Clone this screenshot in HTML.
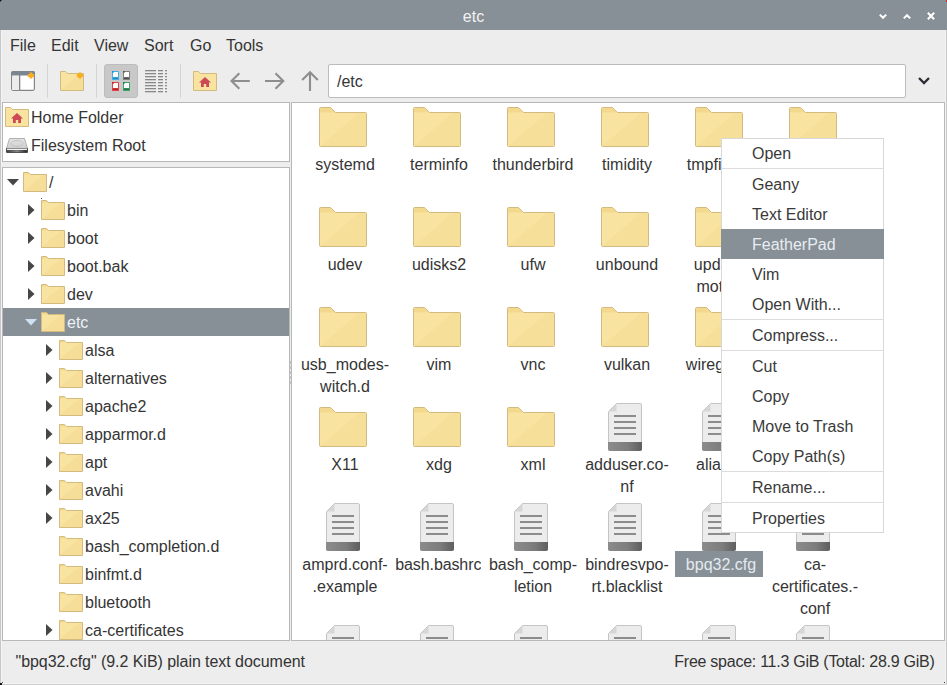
<!DOCTYPE html><html><head><meta charset="utf-8"><style>html,body{margin:0;padding:0;width:947px;height:685px;overflow:hidden;background:#ededed;}.t{position:absolute;white-space:pre;font-family:"Liberation Sans", sans-serif;}svg{display:block}</style></head><body>
<div style="position:absolute;left:0px;top:0px;width:947px;height:685px;background:#ededed"></div>
<div style="position:absolute;left:0px;top:0px;width:947px;height:30px;background:#878f97"></div>
<div class="t" style="left:323.5px;width:300px;text-align:center;top:7.46px;font-size:16px;line-height:20px;color:#f2f2f2;">etc</div>
<svg style="position:absolute;left:876px;top:10px" width="14" height="14" viewBox="0 0 14 14"><path d="M3.8 4.6L7 7.8L10.2 4.6" fill="none" stroke="#fff" stroke-width="2"/></svg>
<svg style="position:absolute;left:900px;top:10px" width="14" height="14" viewBox="0 0 14 14"><path d="M3.8 8.4L7 5.2L10.2 8.4" fill="none" stroke="#fff" stroke-width="2"/></svg>
<svg style="position:absolute;left:924px;top:9px" width="14" height="14" viewBox="0 0 14 14"><path d="M3.8 3.8L10.2 10.2M10.2 3.8L3.8 10.2" fill="none" stroke="#fff" stroke-width="2"/></svg>
<div style="position:absolute;left:946px;top:0px;width:1px;height:2px;background:#e02020"></div>
<div style="position:absolute;left:0px;top:0px;width:1px;height:1px;background:#111"></div>
<div style="position:absolute;left:1px;top:0px;width:1px;height:1px;background:#555"></div>
<div style="position:absolute;left:0px;top:1px;width:1px;height:1px;background:#555"></div>
<div style="position:absolute;left:0px;top:30px;width:1px;height:655px;background:#c8c8c8"></div>
<div style="position:absolute;left:946px;top:30px;width:1px;height:655px;background:#c8c8c8"></div>
<div style="position:absolute;left:1px;top:30px;width:1px;height:654px;background:#f3f3f3"></div>
<div style="position:absolute;left:945px;top:30px;width:1px;height:654px;background:#f3f3f3"></div>
<div style="position:absolute;left:0px;top:684px;width:947px;height:1px;background:#cdcdcd"></div>
<div style="position:absolute;left:1px;top:683px;width:945px;height:1px;background:#f3f3f3"></div>
<div style="position:absolute;left:0px;top:683px;width:2px;height:2px;background:#111"></div>
<div style="position:absolute;left:2px;top:682px;width:1px;height:1px;background:#444"></div>
<div style="position:absolute;left:944px;top:682px;width:1px;height:1px;background:#333"></div>
<div class="t" style="left:10px;top:36.46px;font-size:16px;line-height:20px;color:#353535;">File</div>
<div class="t" style="left:51px;top:36.46px;font-size:16px;line-height:20px;color:#353535;">Edit</div>
<div class="t" style="left:94px;top:36.46px;font-size:16px;line-height:20px;color:#353535;">View</div>
<div class="t" style="left:144px;top:36.46px;font-size:16px;line-height:20px;color:#353535;">Sort</div>
<div class="t" style="left:190px;top:36.46px;font-size:16px;line-height:20px;color:#353535;">Go</div>
<div class="t" style="left:226px;top:36.46px;font-size:16px;line-height:20px;color:#353535;">Tools</div>
<svg style="position:absolute;left:11px;top:71px" width="24" height="20" viewBox="0 0 24 20"><rect x="0.6" y="0.6" width="22.8" height="18.8" rx="1.8" fill="#fff" stroke="#858585" stroke-width="1.2"/><rect x="1.2" y="5" width="7.2" height="14" fill="#ececec"/><path d="M0 4.6V2.2Q0 0 2.2 0H21.8Q24 0 24 2.2V4.6Z" fill="#7b858f"/><rect x="8" y="4" width="1.3" height="16" fill="#858585"/><path d="M20 1.4V7.6M16.9 4.5H23.1" stroke="#f8ae22" stroke-width="2.8"/></svg>
<div style="position:absolute;left:47px;top:64px;width:1px;height:34px;background:#d4d4d4"></div>
<svg style="position:absolute;left:60px;top:71px" width="24" height="20" viewBox="0 0 24 20"><path d="M0.5 19.5V0.5H5.5L7.5 2.5H23.5V19.5Z" fill="#f8e3a0" stroke="#d3ba80"/><path d="M1 19L20 3H23V19Z" fill="#f3da92" opacity="0.6"/><path d="M20 1.4V7.6M16.9 4.5H23.1" stroke="#f8ae22" stroke-width="2.8"/></svg>
<div style="position:absolute;left:96px;top:64px;width:1px;height:34px;background:#d4d4d4"></div>
<div style="position:absolute;left:104px;top:64px;width:34px;height:34px;background:#c8c8c8;border-radius:3px;box-sizing:border-box;border:1px solid #bdbdbd"></div>
<svg style="position:absolute;left:112px;top:71px" width="7" height="9" viewBox="0 0 7 9"><rect x="0" y="0" width="7" height="9" rx="0.6" fill="#3fb0e6"/><path d="M1 2L2 1H6V6H1Z" fill="#fff"/><rect x="1" y="6.5" width="5" height="1.5" fill="#1e8cc8"/><rect x="0" y="0" width="1.5" height="1.5" fill="#1e8cc8"/></svg>
<svg style="position:absolute;left:123px;top:71px" width="7" height="9" viewBox="0 0 7 9"><rect x="0" y="0" width="7" height="9" rx="0.6" fill="#808080"/><path d="M1 2L2 1H6V6H1Z" fill="#fff"/><rect x="1" y="6.5" width="5" height="1.5" fill="#505050"/><rect x="0" y="0" width="1.5" height="1.5" fill="#505050"/></svg>
<svg style="position:absolute;left:112px;top:82px" width="7" height="9" viewBox="0 0 7 9"><rect x="0" y="0" width="7" height="9" rx="0.6" fill="#e04444"/><path d="M1 2L2 1H6V6H1Z" fill="#fff"/><rect x="1" y="6.5" width="5" height="1.5" fill="#c01e1e"/><rect x="0" y="0" width="1.5" height="1.5" fill="#c01e1e"/></svg>
<svg style="position:absolute;left:123px;top:82px" width="7" height="9" viewBox="0 0 7 9"><rect x="0" y="0" width="7" height="9" rx="0.6" fill="#44a06a"/><path d="M1 2L2 1H6V6H1Z" fill="#fff"/><rect x="1" y="6.5" width="5" height="1.5" fill="#237a48"/><rect x="0" y="0" width="1.5" height="1.5" fill="#237a48"/></svg>
<svg style="position:absolute;left:145px;top:70px" width="23" height="23" viewBox="0 0 23 23"><rect x="0" y="0" width="11" height="1.3" fill="#888888"/><rect x="13" y="0" width="5" height="1.3" fill="#888888"/><rect x="20" y="0" width="2" height="1.3" fill="#888888"/><rect x="0" y="3" width="11" height="1.3" fill="#888888"/><rect x="13" y="3" width="5" height="1.3" fill="#888888"/><rect x="20" y="3" width="2" height="1.3" fill="#888888"/><rect x="0" y="6" width="11" height="1.3" fill="#888888"/><rect x="13" y="6" width="5" height="1.3" fill="#888888"/><rect x="20" y="6" width="2" height="1.3" fill="#888888"/><rect x="0" y="9" width="11" height="1.3" fill="#888888"/><rect x="13" y="9" width="5" height="1.3" fill="#888888"/><rect x="20" y="9" width="2" height="1.3" fill="#888888"/><rect x="0" y="12" width="11" height="1.3" fill="#888888"/><rect x="13" y="12" width="5" height="1.3" fill="#888888"/><rect x="20" y="12" width="2" height="1.3" fill="#888888"/><rect x="0" y="15" width="11" height="1.3" fill="#888888"/><rect x="13" y="15" width="5" height="1.3" fill="#888888"/><rect x="20" y="15" width="2" height="1.3" fill="#888888"/><rect x="0" y="18" width="11" height="1.3" fill="#888888"/><rect x="13" y="18" width="5" height="1.3" fill="#888888"/><rect x="20" y="18" width="2" height="1.3" fill="#888888"/><rect x="0" y="21" width="11" height="1.3" fill="#888888"/><rect x="13" y="21" width="5" height="1.3" fill="#888888"/><rect x="20" y="21" width="2" height="1.3" fill="#888888"/></svg>
<div style="position:absolute;left:180px;top:64px;width:1px;height:34px;background:#d4d4d4"></div>
<svg style="position:absolute;left:193px;top:71px" width="24" height="20" viewBox="0 0 24 20"><path d="M0.5 19.5V0.5H5.5L7.5 2.5H23.5V19.5Z" fill="#f8e3a0" stroke="#d3ba80"/><path d="M12 6L18 11.5H16V16H8V11.5H6Z" fill="#cb4a55"/><rect x="10.8" y="13" width="2.4" height="3" fill="#f8e3a0"/></svg>
<svg style="position:absolute;left:228px;top:70px" width="24" height="22" viewBox="0 0 24 22"><path d="M21.8 11H4M11.3 3.2L3.5 11L11.3 18.8" fill="none" stroke="#8e8e8e" stroke-width="2.1"/></svg>
<svg style="position:absolute;left:262px;top:70px" width="24" height="22" viewBox="0 0 24 22"><path d="M3 11H20.8M13.5 3.2L21.3 11L13.5 18.8" fill="none" stroke="#8e8e8e" stroke-width="2.1"/></svg>
<svg style="position:absolute;left:298px;top:70px" width="24" height="22" viewBox="0 0 24 22"><path d="M12 21V3M4.2 10L12 2.2L19.8 10" fill="none" stroke="#8e8e8e" stroke-width="2.1"/></svg>
<div style="position:absolute;left:328px;top:64px;width:578px;height:34px;background:#fff;border:1px solid #bcbcbc;border-radius:2px;box-sizing:border-box"></div>
<div class="t" style="left:337px;top:72.46px;font-size:16px;line-height:20px;color:#353535;">/etc</div>
<svg style="position:absolute;left:916px;top:74px" width="16" height="14" viewBox="0 0 16 14"><path d="M3 4L8 9L13 4" fill="none" stroke="#2b2f33" stroke-width="2.4"/></svg>
<div style="position:absolute;left:2px;top:102px;width:288px;height:60px;background:#fff;border:1px solid #b8b8b8;box-sizing:border-box"></div>
<svg style="position:absolute;left:5px;top:107px" width="24" height="20" viewBox="0 0 24 20"><path d="M0.5 19.5V0.5H5.5L7.5 2.5H23.5V19.5Z" fill="#f8e3a0" stroke="#d3ba80"/><path d="M12 6L18 11.5H16V16H8V11.5H6Z" fill="#cb4a55"/><rect x="10.8" y="13" width="2.4" height="3" fill="#f8e3a0"/></svg>
<div class="t" style="left:31px;top:108.46px;font-size:16px;line-height:20px;color:#353535;">Home Folder</div>
<svg style="position:absolute;left:5px;top:137px" width="24" height="18" viewBox="0 0 24 18"><defs><linearGradient id="hd" x1="0" x2="1"><stop offset="0" stop-color="#444"/><stop offset="0.5" stop-color="#888"/><stop offset="1" stop-color="#2a2a2a"/></linearGradient><linearGradient id="ht" x1="0" y1="0" x2="0" y2="1"><stop offset="0" stop-color="#e4e4e4"/><stop offset="1" stop-color="#cfcfcf"/></linearGradient></defs><path d="M4.5 1.5H19.5L22.5 11.5H1.5Z" fill="url(#ht)" stroke="#a8a8a8" stroke-width="0.9"/><ellipse cx="12" cy="6.5" rx="6" ry="3" fill="none" stroke="#bdbdbd" stroke-width="0.8"/><rect x="1" y="11" width="22" height="5" rx="1" fill="#4a4a4a"/><rect x="2" y="11.6" width="20" height="1.4" fill="#f2f2f2"/><rect x="2.5" y="13.2" width="19" height="2" fill="url(#hd)"/></svg>
<div class="t" style="left:31px;top:136.46px;font-size:16px;line-height:20px;color:#353535;">Filesystem Root</div>
<div style="position:absolute;left:2px;top:167px;width:288px;height:474px;background:#fff;border:1px solid #b8b8b8;box-sizing:border-box"></div>
<div style="position:absolute;left:3px;top:168px;width:286px;height:472px;overflow:hidden">
<svg style="position:absolute;left:4px;top:11px" width="12" height="7" viewBox="0 0 12 7"><path d="M0 0H12L6 6.5Z" fill="#464646"/></svg>
<svg style="position:absolute;left:20px;top:4px" width="24" height="20" viewBox="0 0 24 20"><path d="M0.5 19.5V0.5H5.5L7.5 2.5H23.5V19.5Z" fill="#f8e3a0" stroke="#d3ba80"/><path d="M1 1H5.3L6.8 2.5H1Z" fill="#f3d98e"/><path d="M1 19L20 3H23V19Z" fill="#f3da92" opacity="0.5"/></svg>
<div class="t" style="left:46px;top:5.46px;font-size:16px;line-height:20px;color:#353535">/</div>
<svg style="position:absolute;left:25px;top:36px" width="7" height="12" viewBox="0 0 7 12"><path d="M0 0V12L6.5 6Z" fill="#464646"/></svg>
<svg style="position:absolute;left:38px;top:32px" width="24" height="20" viewBox="0 0 24 20"><path d="M0.5 19.5V0.5H5.5L7.5 2.5H23.5V19.5Z" fill="#f8e3a0" stroke="#d3ba80"/><path d="M1 1H5.3L6.8 2.5H1Z" fill="#f3d98e"/><path d="M1 19L20 3H23V19Z" fill="#f3da92" opacity="0.5"/></svg>
<div class="t" style="left:64px;top:33.46px;font-size:16px;line-height:20px;color:#353535">bin</div>
<svg style="position:absolute;left:25px;top:64px" width="7" height="12" viewBox="0 0 7 12"><path d="M0 0V12L6.5 6Z" fill="#464646"/></svg>
<svg style="position:absolute;left:38px;top:60px" width="24" height="20" viewBox="0 0 24 20"><path d="M0.5 19.5V0.5H5.5L7.5 2.5H23.5V19.5Z" fill="#f8e3a0" stroke="#d3ba80"/><path d="M1 1H5.3L6.8 2.5H1Z" fill="#f3d98e"/><path d="M1 19L20 3H23V19Z" fill="#f3da92" opacity="0.5"/></svg>
<div class="t" style="left:64px;top:61.46px;font-size:16px;line-height:20px;color:#353535">boot</div>
<svg style="position:absolute;left:25px;top:92px" width="7" height="12" viewBox="0 0 7 12"><path d="M0 0V12L6.5 6Z" fill="#464646"/></svg>
<svg style="position:absolute;left:38px;top:88px" width="24" height="20" viewBox="0 0 24 20"><path d="M0.5 19.5V0.5H5.5L7.5 2.5H23.5V19.5Z" fill="#f8e3a0" stroke="#d3ba80"/><path d="M1 1H5.3L6.8 2.5H1Z" fill="#f3d98e"/><path d="M1 19L20 3H23V19Z" fill="#f3da92" opacity="0.5"/></svg>
<div class="t" style="left:64px;top:89.46px;font-size:16px;line-height:20px;color:#353535">boot.bak</div>
<svg style="position:absolute;left:25px;top:120px" width="7" height="12" viewBox="0 0 7 12"><path d="M0 0V12L6.5 6Z" fill="#464646"/></svg>
<svg style="position:absolute;left:38px;top:116px" width="24" height="20" viewBox="0 0 24 20"><path d="M0.5 19.5V0.5H5.5L7.5 2.5H23.5V19.5Z" fill="#f8e3a0" stroke="#d3ba80"/><path d="M1 1H5.3L6.8 2.5H1Z" fill="#f3d98e"/><path d="M1 19L20 3H23V19Z" fill="#f3da92" opacity="0.5"/></svg>
<div class="t" style="left:64px;top:117.46px;font-size:16px;line-height:20px;color:#353535">dev</div>
<div style="position:absolute;left:0px;top:140px;width:286px;height:28px;background:#878f97"></div>
<svg style="position:absolute;left:22px;top:151px" width="12" height="7" viewBox="0 0 12 7"><path d="M0 0H12L6 6.5Z" fill="#cfe2f3"/></svg>
<svg style="position:absolute;left:38px;top:144px" width="24" height="20" viewBox="0 0 24 20"><path d="M0.5 19.5V0.5H5.5L7.5 2.5H23.5V19.5Z" fill="#f8e3a0" stroke="#d3ba80"/><path d="M1 1H5.3L6.8 2.5H1Z" fill="#f3d98e"/><path d="M1 19L20 3H23V19Z" fill="#f3da92" opacity="0.5"/></svg>
<div class="t" style="left:64px;top:145.46px;font-size:16px;line-height:20px;color:#eef2f6">etc</div>
<svg style="position:absolute;left:43px;top:176px" width="7" height="12" viewBox="0 0 7 12"><path d="M0 0V12L6.5 6Z" fill="#464646"/></svg>
<svg style="position:absolute;left:56px;top:172px" width="24" height="20" viewBox="0 0 24 20"><path d="M0.5 19.5V0.5H5.5L7.5 2.5H23.5V19.5Z" fill="#f8e3a0" stroke="#d3ba80"/><path d="M1 1H5.3L6.8 2.5H1Z" fill="#f3d98e"/><path d="M1 19L20 3H23V19Z" fill="#f3da92" opacity="0.5"/></svg>
<div class="t" style="left:82px;top:173.46px;font-size:16px;line-height:20px;color:#353535">alsa</div>
<svg style="position:absolute;left:43px;top:204px" width="7" height="12" viewBox="0 0 7 12"><path d="M0 0V12L6.5 6Z" fill="#464646"/></svg>
<svg style="position:absolute;left:56px;top:200px" width="24" height="20" viewBox="0 0 24 20"><path d="M0.5 19.5V0.5H5.5L7.5 2.5H23.5V19.5Z" fill="#f8e3a0" stroke="#d3ba80"/><path d="M1 1H5.3L6.8 2.5H1Z" fill="#f3d98e"/><path d="M1 19L20 3H23V19Z" fill="#f3da92" opacity="0.5"/></svg>
<div class="t" style="left:82px;top:201.46px;font-size:16px;line-height:20px;color:#353535">alternatives</div>
<svg style="position:absolute;left:43px;top:232px" width="7" height="12" viewBox="0 0 7 12"><path d="M0 0V12L6.5 6Z" fill="#464646"/></svg>
<svg style="position:absolute;left:56px;top:228px" width="24" height="20" viewBox="0 0 24 20"><path d="M0.5 19.5V0.5H5.5L7.5 2.5H23.5V19.5Z" fill="#f8e3a0" stroke="#d3ba80"/><path d="M1 1H5.3L6.8 2.5H1Z" fill="#f3d98e"/><path d="M1 19L20 3H23V19Z" fill="#f3da92" opacity="0.5"/></svg>
<div class="t" style="left:82px;top:229.46px;font-size:16px;line-height:20px;color:#353535">apache2</div>
<svg style="position:absolute;left:43px;top:260px" width="7" height="12" viewBox="0 0 7 12"><path d="M0 0V12L6.5 6Z" fill="#464646"/></svg>
<svg style="position:absolute;left:56px;top:256px" width="24" height="20" viewBox="0 0 24 20"><path d="M0.5 19.5V0.5H5.5L7.5 2.5H23.5V19.5Z" fill="#f8e3a0" stroke="#d3ba80"/><path d="M1 1H5.3L6.8 2.5H1Z" fill="#f3d98e"/><path d="M1 19L20 3H23V19Z" fill="#f3da92" opacity="0.5"/></svg>
<div class="t" style="left:82px;top:257.46px;font-size:16px;line-height:20px;color:#353535">apparmor.d</div>
<svg style="position:absolute;left:43px;top:288px" width="7" height="12" viewBox="0 0 7 12"><path d="M0 0V12L6.5 6Z" fill="#464646"/></svg>
<svg style="position:absolute;left:56px;top:284px" width="24" height="20" viewBox="0 0 24 20"><path d="M0.5 19.5V0.5H5.5L7.5 2.5H23.5V19.5Z" fill="#f8e3a0" stroke="#d3ba80"/><path d="M1 1H5.3L6.8 2.5H1Z" fill="#f3d98e"/><path d="M1 19L20 3H23V19Z" fill="#f3da92" opacity="0.5"/></svg>
<div class="t" style="left:82px;top:285.46px;font-size:16px;line-height:20px;color:#353535">apt</div>
<svg style="position:absolute;left:43px;top:316px" width="7" height="12" viewBox="0 0 7 12"><path d="M0 0V12L6.5 6Z" fill="#464646"/></svg>
<svg style="position:absolute;left:56px;top:312px" width="24" height="20" viewBox="0 0 24 20"><path d="M0.5 19.5V0.5H5.5L7.5 2.5H23.5V19.5Z" fill="#f8e3a0" stroke="#d3ba80"/><path d="M1 1H5.3L6.8 2.5H1Z" fill="#f3d98e"/><path d="M1 19L20 3H23V19Z" fill="#f3da92" opacity="0.5"/></svg>
<div class="t" style="left:82px;top:313.46px;font-size:16px;line-height:20px;color:#353535">avahi</div>
<svg style="position:absolute;left:43px;top:344px" width="7" height="12" viewBox="0 0 7 12"><path d="M0 0V12L6.5 6Z" fill="#464646"/></svg>
<svg style="position:absolute;left:56px;top:340px" width="24" height="20" viewBox="0 0 24 20"><path d="M0.5 19.5V0.5H5.5L7.5 2.5H23.5V19.5Z" fill="#f8e3a0" stroke="#d3ba80"/><path d="M1 1H5.3L6.8 2.5H1Z" fill="#f3d98e"/><path d="M1 19L20 3H23V19Z" fill="#f3da92" opacity="0.5"/></svg>
<div class="t" style="left:82px;top:341.46px;font-size:16px;line-height:20px;color:#353535">ax25</div>
<svg style="position:absolute;left:56px;top:368px" width="24" height="20" viewBox="0 0 24 20"><path d="M0.5 19.5V0.5H5.5L7.5 2.5H23.5V19.5Z" fill="#f8e3a0" stroke="#d3ba80"/><path d="M1 1H5.3L6.8 2.5H1Z" fill="#f3d98e"/><path d="M1 19L20 3H23V19Z" fill="#f3da92" opacity="0.5"/></svg>
<div class="t" style="left:82px;top:369.46px;font-size:16px;line-height:20px;color:#353535">bash_completion.d</div>
<svg style="position:absolute;left:56px;top:396px" width="24" height="20" viewBox="0 0 24 20"><path d="M0.5 19.5V0.5H5.5L7.5 2.5H23.5V19.5Z" fill="#f8e3a0" stroke="#d3ba80"/><path d="M1 1H5.3L6.8 2.5H1Z" fill="#f3d98e"/><path d="M1 19L20 3H23V19Z" fill="#f3da92" opacity="0.5"/></svg>
<div class="t" style="left:82px;top:397.46px;font-size:16px;line-height:20px;color:#353535">binfmt.d</div>
<svg style="position:absolute;left:56px;top:424px" width="24" height="20" viewBox="0 0 24 20"><path d="M0.5 19.5V0.5H5.5L7.5 2.5H23.5V19.5Z" fill="#f8e3a0" stroke="#d3ba80"/><path d="M1 1H5.3L6.8 2.5H1Z" fill="#f3d98e"/><path d="M1 19L20 3H23V19Z" fill="#f3da92" opacity="0.5"/></svg>
<div class="t" style="left:82px;top:425.46px;font-size:16px;line-height:20px;color:#353535">bluetooth</div>
<svg style="position:absolute;left:43px;top:456px" width="7" height="12" viewBox="0 0 7 12"><path d="M0 0V12L6.5 6Z" fill="#464646"/></svg>
<svg style="position:absolute;left:56px;top:452px" width="24" height="20" viewBox="0 0 24 20"><path d="M0.5 19.5V0.5H5.5L7.5 2.5H23.5V19.5Z" fill="#f8e3a0" stroke="#d3ba80"/><path d="M1 1H5.3L6.8 2.5H1Z" fill="#f3d98e"/><path d="M1 19L20 3H23V19Z" fill="#f3da92" opacity="0.5"/></svg>
<div class="t" style="left:82px;top:453.46px;font-size:16px;line-height:20px;color:#353535">ca-certificates</div>
</div>
<div style="position:absolute;left:41px;top:198px;width:1px;height:1px;background:#555"></div>
<div style="position:absolute;left:290px;top:361px;width:1px;height:3px;background:#c4c4c4"></div>
<div style="position:absolute;left:290px;top:366px;width:1px;height:3px;background:#c4c4c4"></div>
<div style="position:absolute;left:290px;top:371px;width:1px;height:3px;background:#c4c4c4"></div>
<div style="position:absolute;left:290px;top:376px;width:1px;height:3px;background:#c4c4c4"></div>
<div style="position:absolute;left:290px;top:381px;width:1px;height:3px;background:#c4c4c4"></div>
<div style="position:absolute;left:291px;top:102px;width:654px;height:539px;background:#fff;border:1px solid #b8b8b8;box-sizing:border-box"></div>
<div style="position:absolute;left:292px;top:103px;width:652px;height:537px;overflow:hidden">
<svg style="position:absolute;left:27px;top:4px" width="48" height="40" viewBox="0 0 48 40"><path d="M0.5 38.5V1.5Q0.5 0.5 1.5 0.5H11.5L16.5 5.5H46.5Q47.5 5.5 47.5 6.5V38.5Q47.5 39.5 46.5 39.5H1.5Q0.5 39.5 0.5 38.5Z" fill="#f8e3a0" stroke="#d3ba80"/><path d="M1 1.5Q1 1 1.5 1H11.3L15.8 5.5H1Z" fill="#f3d98e"/><path d="M1 39L40 6H47V38.5Q47 39 46.5 39Z" fill="#f2d991" opacity="0.45"/></svg>
<div class="t" style="left:6.0px;width:94px;text-align:center;top:51.46px;font-size:16px;line-height:22px;color:#353535">systemd</div>
<svg style="position:absolute;left:121px;top:4px" width="48" height="40" viewBox="0 0 48 40"><path d="M0.5 38.5V1.5Q0.5 0.5 1.5 0.5H11.5L16.5 5.5H46.5Q47.5 5.5 47.5 6.5V38.5Q47.5 39.5 46.5 39.5H1.5Q0.5 39.5 0.5 38.5Z" fill="#f8e3a0" stroke="#d3ba80"/><path d="M1 1.5Q1 1 1.5 1H11.3L15.8 5.5H1Z" fill="#f3d98e"/><path d="M1 39L40 6H47V38.5Q47 39 46.5 39Z" fill="#f2d991" opacity="0.45"/></svg>
<div class="t" style="left:100.0px;width:94px;text-align:center;top:51.46px;font-size:16px;line-height:22px;color:#353535">terminfo</div>
<svg style="position:absolute;left:215px;top:4px" width="48" height="40" viewBox="0 0 48 40"><path d="M0.5 38.5V1.5Q0.5 0.5 1.5 0.5H11.5L16.5 5.5H46.5Q47.5 5.5 47.5 6.5V38.5Q47.5 39.5 46.5 39.5H1.5Q0.5 39.5 0.5 38.5Z" fill="#f8e3a0" stroke="#d3ba80"/><path d="M1 1.5Q1 1 1.5 1H11.3L15.8 5.5H1Z" fill="#f3d98e"/><path d="M1 39L40 6H47V38.5Q47 39 46.5 39Z" fill="#f2d991" opacity="0.45"/></svg>
<div class="t" style="left:194.0px;width:94px;text-align:center;top:51.46px;font-size:16px;line-height:22px;color:#353535">thunderbird</div>
<svg style="position:absolute;left:309px;top:4px" width="48" height="40" viewBox="0 0 48 40"><path d="M0.5 38.5V1.5Q0.5 0.5 1.5 0.5H11.5L16.5 5.5H46.5Q47.5 5.5 47.5 6.5V38.5Q47.5 39.5 46.5 39.5H1.5Q0.5 39.5 0.5 38.5Z" fill="#f8e3a0" stroke="#d3ba80"/><path d="M1 1.5Q1 1 1.5 1H11.3L15.8 5.5H1Z" fill="#f3d98e"/><path d="M1 39L40 6H47V38.5Q47 39 46.5 39Z" fill="#f2d991" opacity="0.45"/></svg>
<div class="t" style="left:288.0px;width:94px;text-align:center;top:51.46px;font-size:16px;line-height:22px;color:#353535">timidity</div>
<svg style="position:absolute;left:403px;top:4px" width="48" height="40" viewBox="0 0 48 40"><path d="M0.5 38.5V1.5Q0.5 0.5 1.5 0.5H11.5L16.5 5.5H46.5Q47.5 5.5 47.5 6.5V38.5Q47.5 39.5 46.5 39.5H1.5Q0.5 39.5 0.5 38.5Z" fill="#f8e3a0" stroke="#d3ba80"/><path d="M1 1.5Q1 1 1.5 1H11.3L15.8 5.5H1Z" fill="#f3d98e"/><path d="M1 39L40 6H47V38.5Q47 39 46.5 39Z" fill="#f2d991" opacity="0.45"/></svg>
<div class="t" style="left:382.0px;width:94px;text-align:center;top:51.46px;font-size:16px;line-height:22px;color:#353535">tmpfiles.d</div>
<svg style="position:absolute;left:497px;top:4px" width="48" height="40" viewBox="0 0 48 40"><path d="M0.5 38.5V1.5Q0.5 0.5 1.5 0.5H11.5L16.5 5.5H46.5Q47.5 5.5 47.5 6.5V38.5Q47.5 39.5 46.5 39.5H1.5Q0.5 39.5 0.5 38.5Z" fill="#f8e3a0" stroke="#d3ba80"/><path d="M1 1.5Q1 1 1.5 1H11.3L15.8 5.5H1Z" fill="#f3d98e"/><path d="M1 39L40 6H47V38.5Q47 39 46.5 39Z" fill="#f2d991" opacity="0.45"/></svg>
<svg style="position:absolute;left:27px;top:104px" width="48" height="40" viewBox="0 0 48 40"><path d="M0.5 38.5V1.5Q0.5 0.5 1.5 0.5H11.5L16.5 5.5H46.5Q47.5 5.5 47.5 6.5V38.5Q47.5 39.5 46.5 39.5H1.5Q0.5 39.5 0.5 38.5Z" fill="#f8e3a0" stroke="#d3ba80"/><path d="M1 1.5Q1 1 1.5 1H11.3L15.8 5.5H1Z" fill="#f3d98e"/><path d="M1 39L40 6H47V38.5Q47 39 46.5 39Z" fill="#f2d991" opacity="0.45"/></svg>
<div class="t" style="left:6.0px;width:94px;text-align:center;top:151.46px;font-size:16px;line-height:22px;color:#353535">udev</div>
<svg style="position:absolute;left:121px;top:104px" width="48" height="40" viewBox="0 0 48 40"><path d="M0.5 38.5V1.5Q0.5 0.5 1.5 0.5H11.5L16.5 5.5H46.5Q47.5 5.5 47.5 6.5V38.5Q47.5 39.5 46.5 39.5H1.5Q0.5 39.5 0.5 38.5Z" fill="#f8e3a0" stroke="#d3ba80"/><path d="M1 1.5Q1 1 1.5 1H11.3L15.8 5.5H1Z" fill="#f3d98e"/><path d="M1 39L40 6H47V38.5Q47 39 46.5 39Z" fill="#f2d991" opacity="0.45"/></svg>
<div class="t" style="left:100.0px;width:94px;text-align:center;top:151.46px;font-size:16px;line-height:22px;color:#353535">udisks2</div>
<svg style="position:absolute;left:215px;top:104px" width="48" height="40" viewBox="0 0 48 40"><path d="M0.5 38.5V1.5Q0.5 0.5 1.5 0.5H11.5L16.5 5.5H46.5Q47.5 5.5 47.5 6.5V38.5Q47.5 39.5 46.5 39.5H1.5Q0.5 39.5 0.5 38.5Z" fill="#f8e3a0" stroke="#d3ba80"/><path d="M1 1.5Q1 1 1.5 1H11.3L15.8 5.5H1Z" fill="#f3d98e"/><path d="M1 39L40 6H47V38.5Q47 39 46.5 39Z" fill="#f2d991" opacity="0.45"/></svg>
<div class="t" style="left:194.0px;width:94px;text-align:center;top:151.46px;font-size:16px;line-height:22px;color:#353535">ufw</div>
<svg style="position:absolute;left:309px;top:104px" width="48" height="40" viewBox="0 0 48 40"><path d="M0.5 38.5V1.5Q0.5 0.5 1.5 0.5H11.5L16.5 5.5H46.5Q47.5 5.5 47.5 6.5V38.5Q47.5 39.5 46.5 39.5H1.5Q0.5 39.5 0.5 38.5Z" fill="#f8e3a0" stroke="#d3ba80"/><path d="M1 1.5Q1 1 1.5 1H11.3L15.8 5.5H1Z" fill="#f3d98e"/><path d="M1 39L40 6H47V38.5Q47 39 46.5 39Z" fill="#f2d991" opacity="0.45"/></svg>
<div class="t" style="left:288.0px;width:94px;text-align:center;top:151.46px;font-size:16px;line-height:22px;color:#353535">unbound</div>
<svg style="position:absolute;left:403px;top:104px" width="48" height="40" viewBox="0 0 48 40"><path d="M0.5 38.5V1.5Q0.5 0.5 1.5 0.5H11.5L16.5 5.5H46.5Q47.5 5.5 47.5 6.5V38.5Q47.5 39.5 46.5 39.5H1.5Q0.5 39.5 0.5 38.5Z" fill="#f8e3a0" stroke="#d3ba80"/><path d="M1 1.5Q1 1 1.5 1H11.3L15.8 5.5H1Z" fill="#f3d98e"/><path d="M1 39L40 6H47V38.5Q47 39 46.5 39Z" fill="#f2d991" opacity="0.45"/></svg>
<div class="t" style="left:382.0px;width:94px;text-align:center;top:151.46px;font-size:16px;line-height:22px;color:#353535">update-</div>
<div class="t" style="left:382.0px;width:94px;text-align:center;top:173.46px;font-size:16px;line-height:22px;color:#353535">motd.d</div>
<svg style="position:absolute;left:497px;top:104px" width="48" height="40" viewBox="0 0 48 40"><path d="M0.5 38.5V1.5Q0.5 0.5 1.5 0.5H11.5L16.5 5.5H46.5Q47.5 5.5 47.5 6.5V38.5Q47.5 39.5 46.5 39.5H1.5Q0.5 39.5 0.5 38.5Z" fill="#f8e3a0" stroke="#d3ba80"/><path d="M1 1.5Q1 1 1.5 1H11.3L15.8 5.5H1Z" fill="#f3d98e"/><path d="M1 39L40 6H47V38.5Q47 39 46.5 39Z" fill="#f2d991" opacity="0.45"/></svg>
<svg style="position:absolute;left:27px;top:204px" width="48" height="40" viewBox="0 0 48 40"><path d="M0.5 38.5V1.5Q0.5 0.5 1.5 0.5H11.5L16.5 5.5H46.5Q47.5 5.5 47.5 6.5V38.5Q47.5 39.5 46.5 39.5H1.5Q0.5 39.5 0.5 38.5Z" fill="#f8e3a0" stroke="#d3ba80"/><path d="M1 1.5Q1 1 1.5 1H11.3L15.8 5.5H1Z" fill="#f3d98e"/><path d="M1 39L40 6H47V38.5Q47 39 46.5 39Z" fill="#f2d991" opacity="0.45"/></svg>
<div class="t" style="left:6.0px;width:94px;text-align:center;top:251.46px;font-size:16px;line-height:22px;color:#353535">usb_modes-</div>
<div class="t" style="left:6.0px;width:94px;text-align:center;top:273.46px;font-size:16px;line-height:22px;color:#353535">witch.d</div>
<svg style="position:absolute;left:121px;top:204px" width="48" height="40" viewBox="0 0 48 40"><path d="M0.5 38.5V1.5Q0.5 0.5 1.5 0.5H11.5L16.5 5.5H46.5Q47.5 5.5 47.5 6.5V38.5Q47.5 39.5 46.5 39.5H1.5Q0.5 39.5 0.5 38.5Z" fill="#f8e3a0" stroke="#d3ba80"/><path d="M1 1.5Q1 1 1.5 1H11.3L15.8 5.5H1Z" fill="#f3d98e"/><path d="M1 39L40 6H47V38.5Q47 39 46.5 39Z" fill="#f2d991" opacity="0.45"/></svg>
<div class="t" style="left:100.0px;width:94px;text-align:center;top:251.46px;font-size:16px;line-height:22px;color:#353535">vim</div>
<svg style="position:absolute;left:215px;top:204px" width="48" height="40" viewBox="0 0 48 40"><path d="M0.5 38.5V1.5Q0.5 0.5 1.5 0.5H11.5L16.5 5.5H46.5Q47.5 5.5 47.5 6.5V38.5Q47.5 39.5 46.5 39.5H1.5Q0.5 39.5 0.5 38.5Z" fill="#f8e3a0" stroke="#d3ba80"/><path d="M1 1.5Q1 1 1.5 1H11.3L15.8 5.5H1Z" fill="#f3d98e"/><path d="M1 39L40 6H47V38.5Q47 39 46.5 39Z" fill="#f2d991" opacity="0.45"/></svg>
<div class="t" style="left:194.0px;width:94px;text-align:center;top:251.46px;font-size:16px;line-height:22px;color:#353535">vnc</div>
<svg style="position:absolute;left:309px;top:204px" width="48" height="40" viewBox="0 0 48 40"><path d="M0.5 38.5V1.5Q0.5 0.5 1.5 0.5H11.5L16.5 5.5H46.5Q47.5 5.5 47.5 6.5V38.5Q47.5 39.5 46.5 39.5H1.5Q0.5 39.5 0.5 38.5Z" fill="#f8e3a0" stroke="#d3ba80"/><path d="M1 1.5Q1 1 1.5 1H11.3L15.8 5.5H1Z" fill="#f3d98e"/><path d="M1 39L40 6H47V38.5Q47 39 46.5 39Z" fill="#f2d991" opacity="0.45"/></svg>
<div class="t" style="left:288.0px;width:94px;text-align:center;top:251.46px;font-size:16px;line-height:22px;color:#353535">vulkan</div>
<svg style="position:absolute;left:403px;top:204px" width="48" height="40" viewBox="0 0 48 40"><path d="M0.5 38.5V1.5Q0.5 0.5 1.5 0.5H11.5L16.5 5.5H46.5Q47.5 5.5 47.5 6.5V38.5Q47.5 39.5 46.5 39.5H1.5Q0.5 39.5 0.5 38.5Z" fill="#f8e3a0" stroke="#d3ba80"/><path d="M1 1.5Q1 1 1.5 1H11.3L15.8 5.5H1Z" fill="#f3d98e"/><path d="M1 39L40 6H47V38.5Q47 39 46.5 39Z" fill="#f2d991" opacity="0.45"/></svg>
<div class="t" style="left:382.0px;width:94px;text-align:center;top:251.46px;font-size:16px;line-height:22px;color:#353535">wireguard</div>
<svg style="position:absolute;left:497px;top:204px" width="48" height="40" viewBox="0 0 48 40"><path d="M0.5 38.5V1.5Q0.5 0.5 1.5 0.5H11.5L16.5 5.5H46.5Q47.5 5.5 47.5 6.5V38.5Q47.5 39.5 46.5 39.5H1.5Q0.5 39.5 0.5 38.5Z" fill="#f8e3a0" stroke="#d3ba80"/><path d="M1 1.5Q1 1 1.5 1H11.3L15.8 5.5H1Z" fill="#f3d98e"/><path d="M1 39L40 6H47V38.5Q47 39 46.5 39Z" fill="#f2d991" opacity="0.45"/></svg>
<svg style="position:absolute;left:27px;top:304px" width="48" height="40" viewBox="0 0 48 40"><path d="M0.5 38.5V1.5Q0.5 0.5 1.5 0.5H11.5L16.5 5.5H46.5Q47.5 5.5 47.5 6.5V38.5Q47.5 39.5 46.5 39.5H1.5Q0.5 39.5 0.5 38.5Z" fill="#f8e3a0" stroke="#d3ba80"/><path d="M1 1.5Q1 1 1.5 1H11.3L15.8 5.5H1Z" fill="#f3d98e"/><path d="M1 39L40 6H47V38.5Q47 39 46.5 39Z" fill="#f2d991" opacity="0.45"/></svg>
<div class="t" style="left:6.0px;width:94px;text-align:center;top:351.46px;font-size:16px;line-height:22px;color:#353535">X11</div>
<svg style="position:absolute;left:121px;top:304px" width="48" height="40" viewBox="0 0 48 40"><path d="M0.5 38.5V1.5Q0.5 0.5 1.5 0.5H11.5L16.5 5.5H46.5Q47.5 5.5 47.5 6.5V38.5Q47.5 39.5 46.5 39.5H1.5Q0.5 39.5 0.5 38.5Z" fill="#f8e3a0" stroke="#d3ba80"/><path d="M1 1.5Q1 1 1.5 1H11.3L15.8 5.5H1Z" fill="#f3d98e"/><path d="M1 39L40 6H47V38.5Q47 39 46.5 39Z" fill="#f2d991" opacity="0.45"/></svg>
<div class="t" style="left:100.0px;width:94px;text-align:center;top:351.46px;font-size:16px;line-height:22px;color:#353535">xdg</div>
<svg style="position:absolute;left:215px;top:304px" width="48" height="40" viewBox="0 0 48 40"><path d="M0.5 38.5V1.5Q0.5 0.5 1.5 0.5H11.5L16.5 5.5H46.5Q47.5 5.5 47.5 6.5V38.5Q47.5 39.5 46.5 39.5H1.5Q0.5 39.5 0.5 38.5Z" fill="#f8e3a0" stroke="#d3ba80"/><path d="M1 1.5Q1 1 1.5 1H11.3L15.8 5.5H1Z" fill="#f3d98e"/><path d="M1 39L40 6H47V38.5Q47 39 46.5 39Z" fill="#f2d991" opacity="0.45"/></svg>
<div class="t" style="left:194.0px;width:94px;text-align:center;top:351.46px;font-size:16px;line-height:22px;color:#353535">xml</div>
<div style="position:absolute;left:316px;top:300px;width:34px;height:48px;overflow:hidden"><svg width="34" height="48" viewBox="0 0 34 48"><defs><linearGradient id="dg" x1="0" x2="1"><stop offset="0" stop-color="#8c8c8c"/><stop offset="0.6" stop-color="#7c7c7c"/><stop offset="1" stop-color="#5e5e5e"/></linearGradient></defs><path d="M0.5 47V8.5L8.5 0.5H32Q33.5 0.5 33.5 2V47Z" fill="#ececec" stroke="#c4c4c4"/><path d="M0.8 8.5L8.5 0.8V8.5Z" fill="#d6d6d6"/><rect x="6" y="12" width="22" height="2" fill="#8c8c8c"/><rect x="6" y="18" width="22" height="2" fill="#8c8c8c"/><rect x="6" y="24" width="22" height="2" fill="#8c8c8c"/><rect x="6" y="30" width="22" height="2" fill="#8c8c8c"/><path d="M0 39H34V46Q34 48 32 48H2Q0 48 0 46Z" fill="url(#dg)"/></svg></div>
<div class="t" style="left:288.0px;width:94px;text-align:center;top:351.46px;font-size:16px;line-height:22px;color:#353535">adduser.co-</div>
<div class="t" style="left:288.0px;width:94px;text-align:center;top:373.46px;font-size:16px;line-height:22px;color:#353535">nf</div>
<div style="position:absolute;left:410px;top:300px;width:34px;height:48px;overflow:hidden"><svg width="34" height="48" viewBox="0 0 34 48"><defs><linearGradient id="dg" x1="0" x2="1"><stop offset="0" stop-color="#8c8c8c"/><stop offset="0.6" stop-color="#7c7c7c"/><stop offset="1" stop-color="#5e5e5e"/></linearGradient></defs><path d="M0.5 47V8.5L8.5 0.5H32Q33.5 0.5 33.5 2V47Z" fill="#ececec" stroke="#c4c4c4"/><path d="M0.8 8.5L8.5 0.8V8.5Z" fill="#d6d6d6"/><rect x="6" y="12" width="22" height="2" fill="#8c8c8c"/><rect x="6" y="18" width="22" height="2" fill="#8c8c8c"/><rect x="6" y="24" width="22" height="2" fill="#8c8c8c"/><rect x="6" y="30" width="22" height="2" fill="#8c8c8c"/><path d="M0 39H34V46Q34 48 32 48H2Q0 48 0 46Z" fill="url(#dg)"/></svg></div>
<div class="t" style="left:382.0px;width:94px;text-align:center;top:351.46px;font-size:16px;line-height:22px;color:#353535">aliases</div>
<div style="position:absolute;left:504px;top:300px;width:34px;height:48px;overflow:hidden"><svg width="34" height="48" viewBox="0 0 34 48"><defs><linearGradient id="dg" x1="0" x2="1"><stop offset="0" stop-color="#8c8c8c"/><stop offset="0.6" stop-color="#7c7c7c"/><stop offset="1" stop-color="#5e5e5e"/></linearGradient></defs><path d="M0.5 47V8.5L8.5 0.5H32Q33.5 0.5 33.5 2V47Z" fill="#ececec" stroke="#c4c4c4"/><path d="M0.8 8.5L8.5 0.8V8.5Z" fill="#d6d6d6"/><rect x="6" y="12" width="22" height="2" fill="#8c8c8c"/><rect x="6" y="18" width="22" height="2" fill="#8c8c8c"/><rect x="6" y="24" width="22" height="2" fill="#8c8c8c"/><rect x="6" y="30" width="22" height="2" fill="#8c8c8c"/><path d="M0 39H34V46Q34 48 32 48H2Q0 48 0 46Z" fill="url(#dg)"/></svg></div>
<div style="position:absolute;left:34px;top:400px;width:34px;height:48px;overflow:hidden"><svg width="34" height="48" viewBox="0 0 34 48"><defs><linearGradient id="dg" x1="0" x2="1"><stop offset="0" stop-color="#8c8c8c"/><stop offset="0.6" stop-color="#7c7c7c"/><stop offset="1" stop-color="#5e5e5e"/></linearGradient></defs><path d="M0.5 47V8.5L8.5 0.5H32Q33.5 0.5 33.5 2V47Z" fill="#ececec" stroke="#c4c4c4"/><path d="M0.8 8.5L8.5 0.8V8.5Z" fill="#d6d6d6"/><rect x="6" y="12" width="22" height="2" fill="#8c8c8c"/><rect x="6" y="18" width="22" height="2" fill="#8c8c8c"/><rect x="6" y="24" width="22" height="2" fill="#8c8c8c"/><rect x="6" y="30" width="22" height="2" fill="#8c8c8c"/><path d="M0 39H34V46Q34 48 32 48H2Q0 48 0 46Z" fill="url(#dg)"/></svg></div>
<div class="t" style="left:6.0px;width:94px;text-align:center;top:451.46px;font-size:16px;line-height:22px;color:#353535">amprd.conf-</div>
<div class="t" style="left:6.0px;width:94px;text-align:center;top:473.46px;font-size:16px;line-height:22px;color:#353535">.example</div>
<div style="position:absolute;left:128px;top:400px;width:34px;height:48px;overflow:hidden"><svg width="34" height="48" viewBox="0 0 34 48"><defs><linearGradient id="dg" x1="0" x2="1"><stop offset="0" stop-color="#8c8c8c"/><stop offset="0.6" stop-color="#7c7c7c"/><stop offset="1" stop-color="#5e5e5e"/></linearGradient></defs><path d="M0.5 47V8.5L8.5 0.5H32Q33.5 0.5 33.5 2V47Z" fill="#ececec" stroke="#c4c4c4"/><path d="M0.8 8.5L8.5 0.8V8.5Z" fill="#d6d6d6"/><rect x="6" y="12" width="22" height="2" fill="#8c8c8c"/><rect x="6" y="18" width="22" height="2" fill="#8c8c8c"/><rect x="6" y="24" width="22" height="2" fill="#8c8c8c"/><rect x="6" y="30" width="22" height="2" fill="#8c8c8c"/><path d="M0 39H34V46Q34 48 32 48H2Q0 48 0 46Z" fill="url(#dg)"/></svg></div>
<div class="t" style="left:102px;width:87px;overflow:hidden;text-align:left;top:451.46px;font-size:16px;line-height:22px;color:#353535;letter-spacing:-0.1px">&#8202;bash.bashrc</div>
<div style="position:absolute;left:222px;top:400px;width:34px;height:48px;overflow:hidden"><svg width="34" height="48" viewBox="0 0 34 48"><defs><linearGradient id="dg" x1="0" x2="1"><stop offset="0" stop-color="#8c8c8c"/><stop offset="0.6" stop-color="#7c7c7c"/><stop offset="1" stop-color="#5e5e5e"/></linearGradient></defs><path d="M0.5 47V8.5L8.5 0.5H32Q33.5 0.5 33.5 2V47Z" fill="#ececec" stroke="#c4c4c4"/><path d="M0.8 8.5L8.5 0.8V8.5Z" fill="#d6d6d6"/><rect x="6" y="12" width="22" height="2" fill="#8c8c8c"/><rect x="6" y="18" width="22" height="2" fill="#8c8c8c"/><rect x="6" y="24" width="22" height="2" fill="#8c8c8c"/><rect x="6" y="30" width="22" height="2" fill="#8c8c8c"/><path d="M0 39H34V46Q34 48 32 48H2Q0 48 0 46Z" fill="url(#dg)"/></svg></div>
<div class="t" style="left:194.0px;width:94px;text-align:center;top:451.46px;font-size:16px;line-height:22px;color:#353535">bash_comp-</div>
<div class="t" style="left:194.0px;width:94px;text-align:center;top:473.46px;font-size:16px;line-height:22px;color:#353535">letion</div>
<div style="position:absolute;left:316px;top:400px;width:34px;height:48px;overflow:hidden"><svg width="34" height="48" viewBox="0 0 34 48"><defs><linearGradient id="dg" x1="0" x2="1"><stop offset="0" stop-color="#8c8c8c"/><stop offset="0.6" stop-color="#7c7c7c"/><stop offset="1" stop-color="#5e5e5e"/></linearGradient></defs><path d="M0.5 47V8.5L8.5 0.5H32Q33.5 0.5 33.5 2V47Z" fill="#ececec" stroke="#c4c4c4"/><path d="M0.8 8.5L8.5 0.8V8.5Z" fill="#d6d6d6"/><rect x="6" y="12" width="22" height="2" fill="#8c8c8c"/><rect x="6" y="18" width="22" height="2" fill="#8c8c8c"/><rect x="6" y="24" width="22" height="2" fill="#8c8c8c"/><rect x="6" y="30" width="22" height="2" fill="#8c8c8c"/><path d="M0 39H34V46Q34 48 32 48H2Q0 48 0 46Z" fill="url(#dg)"/></svg></div>
<div class="t" style="left:288.0px;width:94px;text-align:center;top:451.46px;font-size:16px;line-height:22px;color:#353535">bindresvpo-</div>
<div class="t" style="left:288.0px;width:94px;text-align:center;top:473.46px;font-size:16px;line-height:22px;color:#353535">rt.blacklist</div>
<div style="position:absolute;left:410px;top:400px;width:34px;height:48px;overflow:hidden"><svg width="34" height="48" viewBox="0 0 34 48"><defs><linearGradient id="dg" x1="0" x2="1"><stop offset="0" stop-color="#8c8c8c"/><stop offset="0.6" stop-color="#7c7c7c"/><stop offset="1" stop-color="#5e5e5e"/></linearGradient></defs><path d="M0.5 47V8.5L8.5 0.5H32Q33.5 0.5 33.5 2V47Z" fill="#ececec" stroke="#c4c4c4"/><path d="M0.8 8.5L8.5 0.8V8.5Z" fill="#d6d6d6"/><rect x="6" y="12" width="22" height="2" fill="#8c8c8c"/><rect x="6" y="18" width="22" height="2" fill="#8c8c8c"/><rect x="6" y="24" width="22" height="2" fill="#8c8c8c"/><rect x="6" y="30" width="22" height="2" fill="#8c8c8c"/><path d="M0 39H34V46Q34 48 32 48H2Q0 48 0 46Z" fill="url(#dg)"/></svg></div>
<div style="position:absolute;left:383px;top:448px;width:88px;height:26px;background:#878f97"></div>
<div class="t" style="left:382.0px;width:94px;text-align:center;top:451.46px;font-size:16px;line-height:22px;color:#e4eaef">bpq32.cfg</div>
<div style="position:absolute;left:504px;top:400px;width:34px;height:48px;overflow:hidden"><svg width="34" height="48" viewBox="0 0 34 48"><defs><linearGradient id="dg" x1="0" x2="1"><stop offset="0" stop-color="#8c8c8c"/><stop offset="0.6" stop-color="#7c7c7c"/><stop offset="1" stop-color="#5e5e5e"/></linearGradient></defs><path d="M0.5 47V8.5L8.5 0.5H32Q33.5 0.5 33.5 2V47Z" fill="#ececec" stroke="#c4c4c4"/><path d="M0.8 8.5L8.5 0.8V8.5Z" fill="#d6d6d6"/><rect x="6" y="12" width="22" height="2" fill="#8c8c8c"/><rect x="6" y="18" width="22" height="2" fill="#8c8c8c"/><rect x="6" y="24" width="22" height="2" fill="#8c8c8c"/><rect x="6" y="30" width="22" height="2" fill="#8c8c8c"/><path d="M0 39H34V46Q34 48 32 48H2Q0 48 0 46Z" fill="url(#dg)"/></svg></div>
<div class="t" style="left:476.0px;width:94px;text-align:center;top:451.46px;font-size:16px;line-height:22px;color:#353535">ca-</div>
<div class="t" style="left:476.0px;width:94px;text-align:center;top:473.46px;font-size:16px;line-height:22px;color:#353535">certificates.-</div>
<div class="t" style="left:476.0px;width:94px;text-align:center;top:495.46px;font-size:16px;line-height:22px;color:#353535">conf</div>
<div style="position:absolute;left:34px;top:522px;width:34px;height:48px;overflow:hidden"><svg width="34" height="48" viewBox="0 0 34 48"><defs><linearGradient id="dg" x1="0" x2="1"><stop offset="0" stop-color="#8c8c8c"/><stop offset="0.6" stop-color="#7c7c7c"/><stop offset="1" stop-color="#5e5e5e"/></linearGradient></defs><path d="M0.5 47V8.5L8.5 0.5H32Q33.5 0.5 33.5 2V47Z" fill="#ececec" stroke="#c4c4c4"/><path d="M0.8 8.5L8.5 0.8V8.5Z" fill="#d6d6d6"/><rect x="6" y="12" width="22" height="2" fill="#8c8c8c"/><rect x="6" y="18" width="22" height="2" fill="#8c8c8c"/><rect x="6" y="24" width="22" height="2" fill="#8c8c8c"/><rect x="6" y="30" width="22" height="2" fill="#8c8c8c"/><path d="M0 39H34V46Q34 48 32 48H2Q0 48 0 46Z" fill="url(#dg)"/></svg></div>
<div style="position:absolute;left:128px;top:522px;width:34px;height:48px;overflow:hidden"><svg width="34" height="48" viewBox="0 0 34 48"><defs><linearGradient id="dg" x1="0" x2="1"><stop offset="0" stop-color="#8c8c8c"/><stop offset="0.6" stop-color="#7c7c7c"/><stop offset="1" stop-color="#5e5e5e"/></linearGradient></defs><path d="M0.5 47V8.5L8.5 0.5H32Q33.5 0.5 33.5 2V47Z" fill="#ececec" stroke="#c4c4c4"/><path d="M0.8 8.5L8.5 0.8V8.5Z" fill="#d6d6d6"/><rect x="6" y="12" width="22" height="2" fill="#8c8c8c"/><rect x="6" y="18" width="22" height="2" fill="#8c8c8c"/><rect x="6" y="24" width="22" height="2" fill="#8c8c8c"/><rect x="6" y="30" width="22" height="2" fill="#8c8c8c"/><path d="M0 39H34V46Q34 48 32 48H2Q0 48 0 46Z" fill="url(#dg)"/></svg></div>
<div style="position:absolute;left:222px;top:522px;width:34px;height:48px;overflow:hidden"><svg width="34" height="48" viewBox="0 0 34 48"><defs><linearGradient id="dg" x1="0" x2="1"><stop offset="0" stop-color="#8c8c8c"/><stop offset="0.6" stop-color="#7c7c7c"/><stop offset="1" stop-color="#5e5e5e"/></linearGradient></defs><path d="M0.5 47V8.5L8.5 0.5H32Q33.5 0.5 33.5 2V47Z" fill="#ececec" stroke="#c4c4c4"/><path d="M0.8 8.5L8.5 0.8V8.5Z" fill="#d6d6d6"/><rect x="6" y="12" width="22" height="2" fill="#8c8c8c"/><rect x="6" y="18" width="22" height="2" fill="#8c8c8c"/><rect x="6" y="24" width="22" height="2" fill="#8c8c8c"/><rect x="6" y="30" width="22" height="2" fill="#8c8c8c"/><path d="M0 39H34V46Q34 48 32 48H2Q0 48 0 46Z" fill="url(#dg)"/></svg></div>
<div style="position:absolute;left:316px;top:522px;width:34px;height:48px;overflow:hidden"><svg width="34" height="48" viewBox="0 0 34 48"><defs><linearGradient id="dg" x1="0" x2="1"><stop offset="0" stop-color="#8c8c8c"/><stop offset="0.6" stop-color="#7c7c7c"/><stop offset="1" stop-color="#5e5e5e"/></linearGradient></defs><path d="M0.5 47V8.5L8.5 0.5H32Q33.5 0.5 33.5 2V47Z" fill="#ececec" stroke="#c4c4c4"/><path d="M0.8 8.5L8.5 0.8V8.5Z" fill="#d6d6d6"/><rect x="6" y="12" width="22" height="2" fill="#8c8c8c"/><rect x="6" y="18" width="22" height="2" fill="#8c8c8c"/><rect x="6" y="24" width="22" height="2" fill="#8c8c8c"/><rect x="6" y="30" width="22" height="2" fill="#8c8c8c"/><path d="M0 39H34V46Q34 48 32 48H2Q0 48 0 46Z" fill="url(#dg)"/></svg></div>
<div style="position:absolute;left:410px;top:522px;width:34px;height:48px;overflow:hidden"><svg width="34" height="48" viewBox="0 0 34 48"><defs><linearGradient id="dg" x1="0" x2="1"><stop offset="0" stop-color="#8c8c8c"/><stop offset="0.6" stop-color="#7c7c7c"/><stop offset="1" stop-color="#5e5e5e"/></linearGradient></defs><path d="M0.5 47V8.5L8.5 0.5H32Q33.5 0.5 33.5 2V47Z" fill="#ececec" stroke="#c4c4c4"/><path d="M0.8 8.5L8.5 0.8V8.5Z" fill="#d6d6d6"/><rect x="6" y="12" width="22" height="2" fill="#8c8c8c"/><rect x="6" y="18" width="22" height="2" fill="#8c8c8c"/><rect x="6" y="24" width="22" height="2" fill="#8c8c8c"/><rect x="6" y="30" width="22" height="2" fill="#8c8c8c"/><path d="M0 39H34V46Q34 48 32 48H2Q0 48 0 46Z" fill="url(#dg)"/></svg></div>
<div style="position:absolute;left:504px;top:522px;width:34px;height:48px;overflow:hidden"><svg width="34" height="48" viewBox="0 0 34 48"><defs><linearGradient id="dg" x1="0" x2="1"><stop offset="0" stop-color="#8c8c8c"/><stop offset="0.6" stop-color="#7c7c7c"/><stop offset="1" stop-color="#5e5e5e"/></linearGradient></defs><path d="M0.5 47V8.5L8.5 0.5H32Q33.5 0.5 33.5 2V47Z" fill="#ececec" stroke="#c4c4c4"/><path d="M0.8 8.5L8.5 0.8V8.5Z" fill="#d6d6d6"/><rect x="6" y="12" width="22" height="2" fill="#8c8c8c"/><rect x="6" y="18" width="22" height="2" fill="#8c8c8c"/><rect x="6" y="24" width="22" height="2" fill="#8c8c8c"/><rect x="6" y="30" width="22" height="2" fill="#8c8c8c"/><path d="M0 39H34V46Q34 48 32 48H2Q0 48 0 46Z" fill="url(#dg)"/></svg></div>
</div>
<div style="position:absolute;left:721px;top:138px;width:163px;height:395px;background:#fff;border:1px solid #d8d8d8;box-sizing:border-box"></div>
<div style="position:absolute;left:722px;top:168px;width:161px;height:1px;background:#dcdcdc"></div>
<div style="position:absolute;left:722px;top:319px;width:161px;height:1px;background:#dcdcdc"></div>
<div style="position:absolute;left:722px;top:350px;width:161px;height:1px;background:#dcdcdc"></div>
<div style="position:absolute;left:722px;top:471px;width:161px;height:1px;background:#dcdcdc"></div>
<div style="position:absolute;left:722px;top:502px;width:161px;height:1px;background:#dcdcdc"></div>
<div style="position:absolute;left:721px;top:229px;width:163px;height:30px;background:#878f97"></div>
<div class="t" style="left:752px;top:144.46px;font-size:16px;line-height:20px;color:#3a3a3a;">Open</div>
<div class="t" style="left:752px;top:175.46px;font-size:16px;line-height:20px;color:#3a3a3a;">Geany</div>
<div class="t" style="left:752px;top:205.46px;font-size:16px;line-height:20px;color:#3a3a3a;">Text Editor</div>
<div class="t" style="left:752px;top:235.46px;font-size:16px;line-height:20px;color:#e8edf1;">FeatherPad</div>
<div class="t" style="left:752px;top:265.46px;font-size:16px;line-height:20px;color:#3a3a3a;">Vim</div>
<div class="t" style="left:752px;top:295.46px;font-size:16px;line-height:20px;color:#3a3a3a;">Open With...</div>
<div class="t" style="left:752px;top:326.46px;font-size:16px;line-height:20px;color:#3a3a3a;">Compress...</div>
<div class="t" style="left:752px;top:357.46px;font-size:16px;line-height:20px;color:#3a3a3a;">Cut</div>
<div class="t" style="left:752px;top:387.46px;font-size:16px;line-height:20px;color:#3a3a3a;">Copy</div>
<div class="t" style="left:752px;top:417.46px;font-size:16px;line-height:20px;color:#3a3a3a;">Move to Trash</div>
<div class="t" style="left:752px;top:447.46px;font-size:16px;line-height:20px;color:#3a3a3a;">Copy Path(s)</div>
<div class="t" style="left:752px;top:478.46px;font-size:16px;line-height:20px;color:#3a3a3a;">Rename...</div>
<div class="t" style="left:752px;top:509.46px;font-size:16px;line-height:20px;color:#3a3a3a;">Properties</div>
<div class="t" style="left:15.5px;top:652.46px;font-size:16px;line-height:20px;color:#333;letter-spacing:-0.05px">"bpq32.cfg" (9.2 KiB) plain text document</div>
<div class="t" style="left:334.5px;width:600px;text-align:right;top:652.46px;font-size:16px;line-height:20px;color:#333;letter-spacing:-0.26px">Free space: 11.3 GiB (Total: 28.9 GiB)</div>
</body></html>
